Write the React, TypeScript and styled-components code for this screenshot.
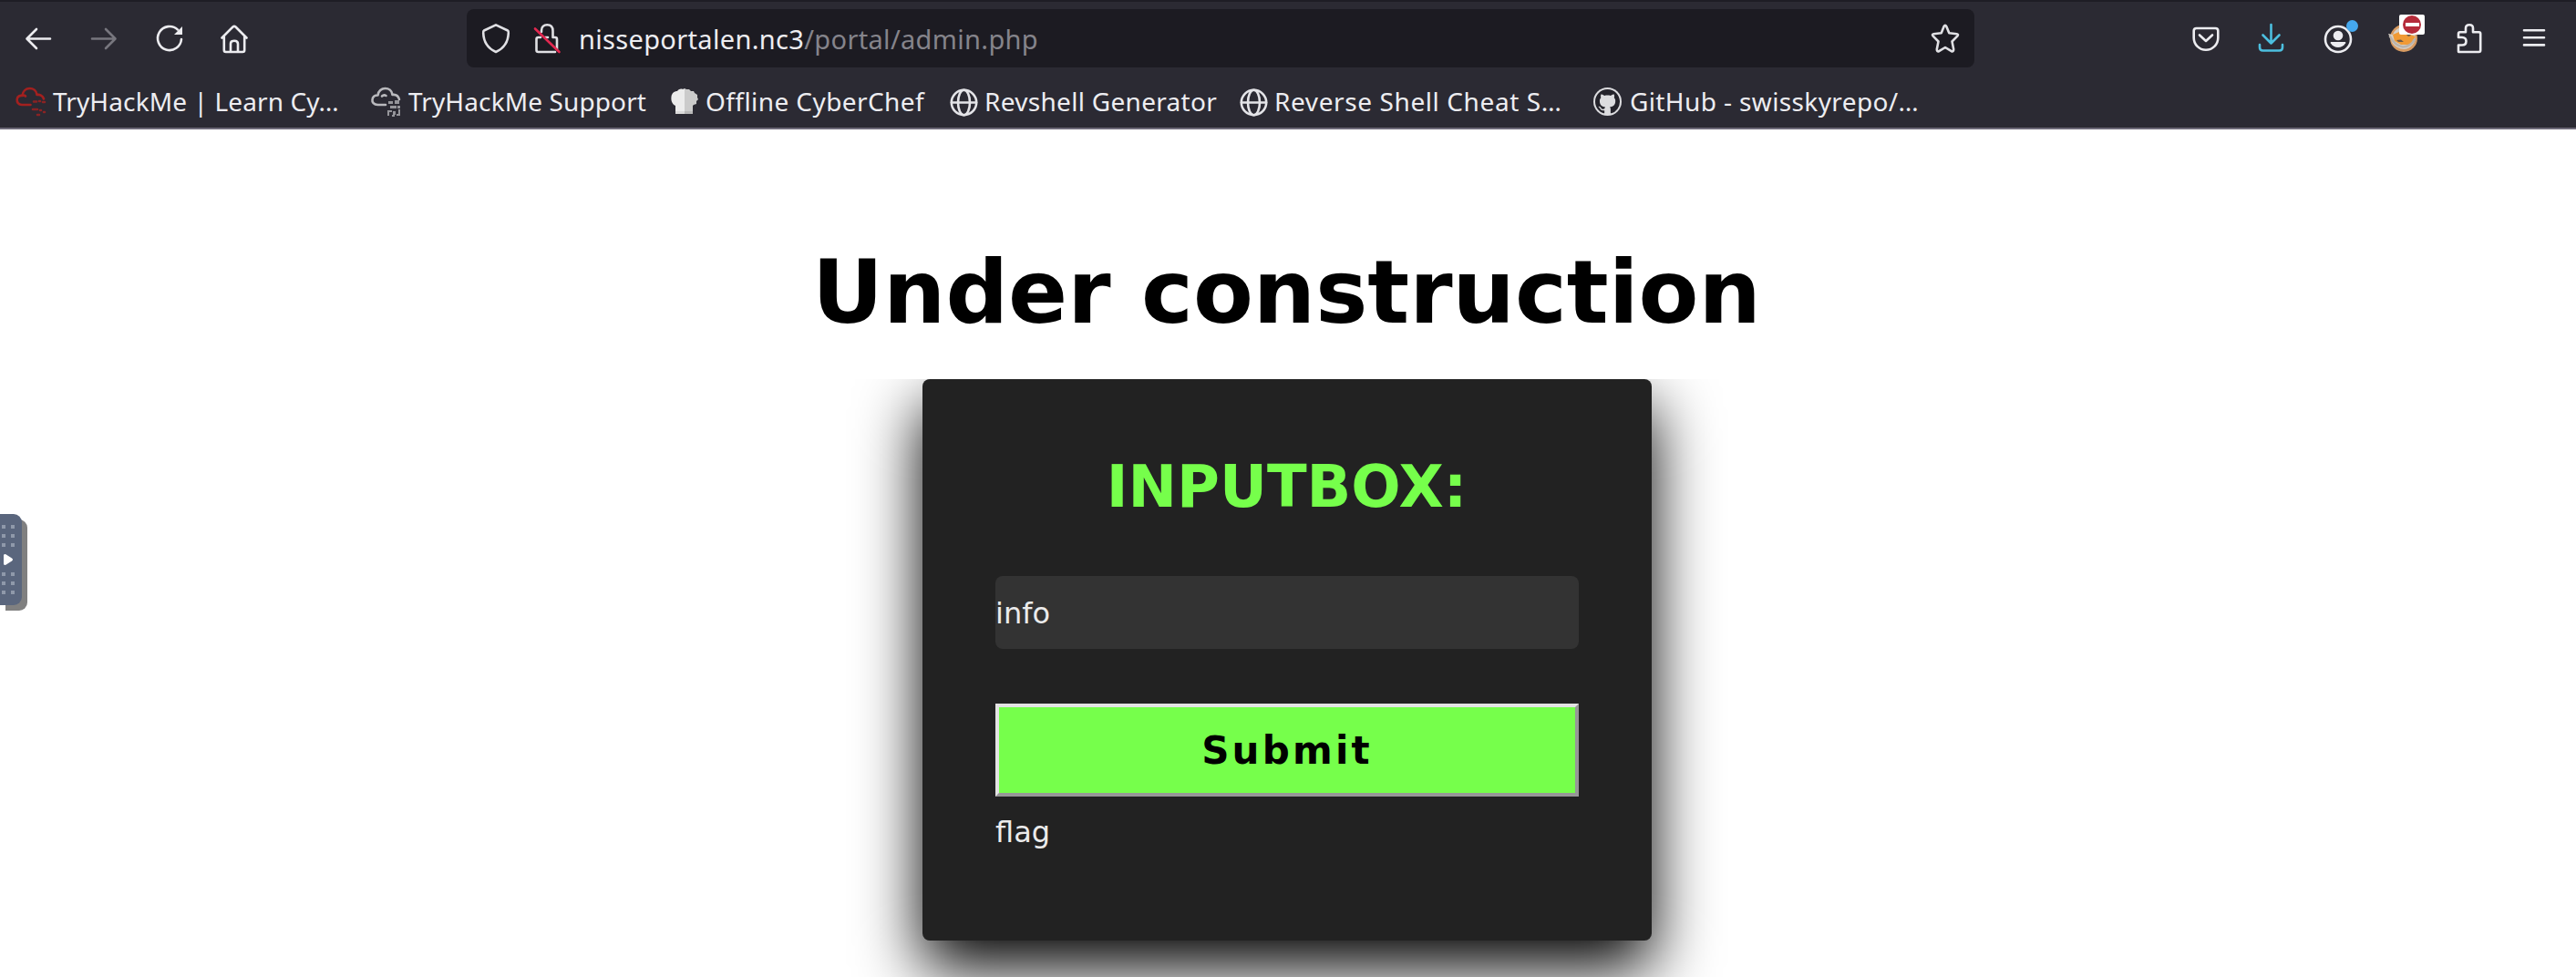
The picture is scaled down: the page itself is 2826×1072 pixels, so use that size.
import React from "react";
import styled, { createGlobalStyle } from "styled-components";

const GlobalStyle = createGlobalStyle`
  html, body { margin: 0; background: #fff; overflow: hidden; }
  *, *::before, *::after { box-sizing: border-box; }
`;

const Screen = styled.div`
  position: relative;
  display: flex;
  flex-direction: column;
  height: 1072px;
  overflow: hidden;
  background: #fff;
  font-family: "DejaVu Sans", sans-serif;
`;

const Chrome = styled.header`
  display: flex;
  flex-direction: column;
  flex: none;
  height: 142px;
  background: #2b2a33;
  border-top: 2px solid #1e1d25;
  border-bottom: 2px solid #6d6a78;
  font-family: "Noto Sans", "Open Sans", sans-serif;
  color: #ededf1;
`;

const NavBar = styled.div`
  display: flex;
  align-items: center;
  height: 80px;
  padding: 0 10px 0 6px;
`;

const NavGroup = styled.div`
  display: flex;
  align-items: center;
`;

const NavButton = styled.button<{ $dim?: boolean }>`
  position: relative;
  display: flex;
  align-items: center;
  justify-content: center;
  width: 72px;
  height: 64px;
  padding: 0;
  border: 0;
  background: none;
  color: ${(p) => (p.$dim ? "#77767e" : "#ececf0")};
`;

const Icon = styled.svg<{ $color?: string }>`
  display: block;
  flex: none;
  width: 32px;
  height: 32px;
  overflow: visible;
  fill: none;
  color: ${(p) => p.$color ?? "inherit"};
  stroke: currentColor;
  stroke-width: 2.6;
  stroke-linecap: round;
  stroke-linejoin: round;
`;

const AddressBar = styled.div`
  display: flex;
  align-items: center;
  width: 1654px;
  height: 64px;
  margin-left: 218px;
  margin-right: auto;
  padding: 0 16px 0 17px;
  border-radius: 8px;
  background: #1c1b22;
  color: #e0e0e4;
`;

const SiteIcons = styled.div`
  display: flex;
  gap: 24px;
`;

const Address = styled.div`
  flex: 1;
  margin-left: 18px;
  padding-top: 1px;
  font-size: 29px;
  line-height: 40px;
  letter-spacing: 0.33px;
  color: #ededf1;
`;

const AddressPath = styled.span`
  color: #85848b;
`;

const AccountDot = styled.span`
  position: absolute;
  left: 46px;
  top: 12px;
  width: 13px;
  height: 13px;
  border-radius: 50%;
  background: #45a8ee;
`;

const BlockBadge = styled.span`
  position: absolute;
  left: 32px;
  top: 6px;
  display: flex;
  align-items: center;
  justify-content: center;
  width: 28px;
  height: 22px;
  border-radius: 2px;
  background: #fff;
`;

const BlockSign = styled.span`
  display: flex;
  align-items: center;
  justify-content: center;
  width: 20px;
  height: 20px;
  border-radius: 50%;
  background: #b52b3a;

  &::after {
    content: "";
    width: 15px;
    height: 4px;
    background: #fff;
  }
`;

const BookmarkBar = styled.nav`
  display: flex;
  align-items: center;
  height: 58px;
  padding-left: 18px;
  padding-top: 2px;
`;

const Bookmark = styled.a<{ $width: number; $tracking: number; $gap?: number }>`
  display: flex;
  align-items: center;
  gap: ${(p) => p.$gap ?? 8}px;
  width: ${(p) => p.$width}px;
  font-size: 28px;
  line-height: 38px;
  letter-spacing: ${(p) => p.$tracking}px;
  white-space: nowrap;
`;

const BookmarkLabel = styled.span`
  padding-bottom: 2px;
`;

const Page = styled.main`
  display: flex;
  flex-direction: column;
  flex: 1;
  padding-top: 123px;
`;

const Title = styled.h1`
  margin: 0;
  height: 151px;
  padding-right: 3px;
  font-size: 96px;
  line-height: 112px;
  font-weight: 700;
  text-align: center;
  color: #000;
`;

const FormArea = styled.section`
  flex: 1;
  display: flex;
  justify-content: center;
  align-items: flex-start;
  padding-right: 2px;
  overflow: hidden;
`;

const Card = styled.form`
  display: flex;
  flex-direction: column;
  width: 800px;
  height: 616px;
  padding: 80px;
  border-radius: 8px;
  background: #222;
  box-shadow: 0 30px 70px #000;
`;

const CardTitle = styled.h2`
  margin: 1px 0 60px;
  padding-right: 1px;
  font-size: 64px;
  line-height: 75px;
  font-weight: 700;
  text-align: center;
  color: #76ff4b;
`;

const TextInput = styled.input`
  width: 100%;
  height: 80px;
  flex: none;
  margin: 0 0 60px;
  padding: 1px 0 0;
  border: 0;
  border-radius: 8px;
  background: #333;
  color: #ebebeb;
  font: 32px "DejaVu Sans", sans-serif;
  outline: none;
`;

const Submit = styled.button`
  width: 100%;
  height: 102px;
  flex: none;
  padding: 0;
  border: 4px solid;
  border-color: #e3e3e3 #979797 #979797 #e3e3e3;
  background: #76ff4b;
  color: #000;
  font: 700 42px "DejaVu Sans", sans-serif;
  letter-spacing: 3.2px;
`;

const Output = styled.p`
  margin: 20px 0 0;
  font-size: 32px;
  line-height: 38px;
  color: #ebebeb;
`;

const Handle = styled.aside`
  position: absolute;
  left: 0;
  top: 564px;
  display: flex;
  flex-direction: column;
  justify-content: space-between;
  width: 24px;
  height: 100px;
  padding: 12px 8px 12px 2px;
  border-radius: 0 9px 9px 0;
  background: #5a667d;
  box-shadow: 6px 6px 0 #808080;
`;

const Dots = styled.div`
  display: grid;
  grid-template-columns: 4px 4px;
  grid-auto-rows: 4px;
  gap: 6px;
`;

const Dot = styled.i`
  background: #8f99aa;
`;

const Arrow = styled.svg`
  display: block;
  width: 10px;
  height: 12px;
  margin-left: 2px;
`;

const Cloud = ({ color, dark }: { color: string; dark?: boolean }) => (
  <Icon viewBox="0 0 32 32" $color={color}>
    <path
      d={
        dark
          ? "M15 19H6.500C2 19 0 16 .5 13 1 9.500 4 8.500 6.500 8.500 7 4 10.500 1 14.500 1S22 3.500 22.500 8C26 7.500 29 9.500 30 13M11 9.500C12.500 8 14 8 15.500 9"
          : "M15.500 19H6C2 19 .5 16 .7 13 1 9.500 4 8.500 6.500 9 7 4 10.500 1 14.500 1S22 3.500 22.500 8C26 7.500 29 9.500 30 12.500M10 9.500C8.500 8 8 8.500 6.500 9"
      }
    />
    {dark ? (
      <path
        stroke="none"
        fill="currentColor"
        opacity="0.75"
        d="M18 15h5v3h-5zM25 14h5v4h-5zM20 20h7v3h-7zM28 20h3v3h-3zM17 25h5v2h-3v4h-2zM23 26h3v4h-3zM29 24h2v7h-4v-2h2zM22 30h3v2h-3z"
      />
    ) : (
      <path d="M19 15.500h3M25 15h1M29 16h2M18 24h5M26 25h1M30 27h1M23 30h2" opacity="0.8" />
    )}
  </Icon>
);

const ChefHat = () => (
  <Icon viewBox="0 0 32 32">
    <g stroke="none">
      <path d="M5 29V20C1 18 0 14 .500 10 1 6 4 4 7 4 8 2 11 1 13 2L15 1V29z" fill="#ececec" />
      <path d="M15 1l2 1 3 0 2 2 3 0 1 2 3 2 0 3 1 2-2 2 0 3-3 1-1 1V29H15z" fill="#cbcbcb" />
      <path d="M5 26H15V29H5z" fill="#dadada" />
      <path d="M15 26H24V29H15z" fill="#b8b8b8" />
    </g>
  </Icon>
);

const Globe = () => (
  <Icon viewBox="0 0 32 32" $color="#e4e4e8">
    <circle cx="15.500" cy="16.500" r="13.700" />
    <ellipse cx="15.500" cy="16.500" rx="6.500" ry="13.700" />
    <path d="M2 16.500H29" />
  </Icon>
);

const GitHub = () => (
  <Icon viewBox="0 0 32 32">
    <circle cx="15.500" cy="15.500" r="15.500" fill="#dcdcdf" stroke="none" />
    <path
      transform="translate(2 2) scale(1.690)"
      fill="#24232b"
      stroke="none"
      d="M8 0C3.580 0 0 3.580 0 8c0 3.540 2.290 6.530 5.470 7.590.4.070.55-.17.55-.38 0-.19-.01-.82-.01-1.490-2.010.37-2.530-.49-2.690-.94-.09-.23-.48-.94-.82-1.130-.28-.15-.68-.52-.01-.53.63-.01 1.080.58 1.230.82.72 1.210 1.870.87 2.330.66.070-.52.28-.87.51-1.070-1.780-.2-3.640-.89-3.640-3.950 0-.87.31-1.590.82-2.150-.08-.2-.36-1.020.08-2.120 0 0 .67-.21 2.200.82.64-.18 1.320-.27 2-.27s1.360.09 2 .27c1.530-1.040 2.200-.82 2.200-.82.44 1.100.16 1.920.08 2.120.51.56.82 1.270.82 2.150 0 3.070-1.870 3.750-3.650 3.950.29.25.54.73.54 1.480 0 1.070-.01 1.930-.01 2.200 0 .21.15.46.55.38A8.010 8.010 0 0 0 16 8c0-4.420-3.580-8-8-8z"
    />
  </Icon>
);

const bookmarks = [
  { label: "TryHackMe | Learn Cy…", width: 390, tracking: 0.12, icon: <Cloud color="#a3201f" /> },
  { label: "TryHackMe Support", width: 328, tracking: 0.12, icon: <Cloud color="#b9b9bd" dark /> },
  { label: "Offline CyberChef", width: 306, tracking: 0.42, gap: 6, icon: <ChefHat /> },
  { label: "Revshell Generator", width: 318, tracking: 0.3, gap: 6, icon: <Globe /> },
  { label: "Reverse Shell Cheat S…", width: 388, tracking: 0.6, gap: 6, icon: <Globe /> },
  { label: "GitHub - swisskyrepo/…", width: 370, tracking: 0.38, icon: <GitHub /> },
];

const DotGrid = () => (
  <Dots>
    {[0, 1, 2, 3, 4, 5].map((n) => (
      <Dot key={n} />
    ))}
  </Dots>
);

export default function App() {
  return (
    <>
      <GlobalStyle />
      <Screen>
        <Chrome>
          <NavBar>
            <NavGroup>
              <NavButton aria-label="Back">
                <Icon viewBox="0 0 32 32">
                  <path d="M29 16.500H4M14 6L3.500 16.500 14 27" />
                </Icon>
              </NavButton>
              <NavButton aria-label="Forward" $dim>
                <Icon viewBox="0 0 32 32">
                  <path d="M3 16.500H28M18 6L28.500 16.500 18 27" />
                </Icon>
              </NavButton>
              <NavButton aria-label="Reload">
                <Icon viewBox="0 0 32 32">
                  <path d="M29 17A13 13 0 1 1 25 6.600" />
                  <path d="M30 3V12H21z" fill="currentColor" stroke="none" />
                </Icon>
              </NavButton>
              <NavButton aria-label="Home">
                <Icon viewBox="0 0 32 32">
                  <path d="M1.500 15.500L13.500 3.500Q15 2.300 16.500 3.500L28.500 15.500M3.800 14V29Q3.800 31 5.800 31H24.200Q26.200 31 26.200 29V14M11 30.500V22Q11 18.800 15 18.800T19 22V30.500" />
                </Icon>
              </NavButton>
            </NavGroup>

            <AddressBar>
              <SiteIcons>
                <Icon viewBox="0 0 32 32">
                  <path d="M15 1.300L28 7.500Q29 8 28.800 10C28.500 20 24 27 15 31 6 27 1.500 20 1.200 10Q1 8 2 7.500z" />
                </Icon>
                <Icon viewBox="0 0 32 32">
                  <path d="M9 9V7.500C9 3.500 11.500 1.300 15.200 1.300S21.500 3.500 21.500 8V15H24Q26 15 26 17V28M8 15H5.500Q3.500 15 3.500 17V29Q3.500 31 5.500 31H24M13 15H16" />
                  <path d="M2 5.500L28.500 31" stroke="#e22850" />
                </Icon>
              </SiteIcons>
              <Address>
                nisseportalen.nc3<AddressPath>/portal/admin.php</AddressPath>
              </Address>
              <Icon viewBox="0 0 32 32">
                <path d="M14.600 3Q16 .500 17.300 3L20.300 10.300 28.700 11.200Q31 11.700 29.300 13.600L23.500 19.500 25.200 28Q25.300 31 22.800 30.200L16 26 9.200 30.200Q6.700 31 6.800 28L8.500 19.500 2.700 13.600Q1 11.700 3.300 11.200L11.700 10.300z" />
              </Icon>
            </AddressBar>

            <NavGroup>
              <NavButton aria-label="Pocket">
                <Icon viewBox="0 0 32 32">
                  <path d="M5.500 5H26.500Q29.300 5 29.300 7.800V15.500A13.300 13.300 0 0 1 2.700 15.500V7.800Q2.700 5 5.500 5zM9 12.500L16 19 23 12.500" />
                </Icon>
              </NavButton>
              <NavButton aria-label="Downloads">
                <Icon viewBox="0 0 32 32" $color="#4cbfdf">
                  <path d="M15.500 1V21.500M6.500 12.500L15.500 21.500 24.500 12.500M3 23V26Q3 29.500 6.500 29.500H24.500Q28 29.500 28 26V23" />
                </Icon>
              </NavButton>
              <NavButton aria-label="Account">
                <Icon viewBox="0 0 32 32">
                  <circle cx="17" cy="17" r="14" />
                  <g fill="currentColor" stroke="none">
                    <circle cx="17" cy="13" r="5.300" />
                    <path d="M9.500 20H24.500Q25.800 20 25.200 21.300A9.500 9.500 0 0 1 8.800 21.300Q8.200 20 9.500 20z" />
                  </g>
                </Icon>
                <AccountDot />
              </NavButton>
              <NavButton aria-label="Cookie extension">
                <Icon viewBox="0 0 32 32">
                  <g stroke="none">
                    <circle cx="17" cy="16" r="15" fill="#d79b62" />
                    <path d="M0 11L5 12Q7 6 14 4L29 10Q32 18 26 24 19 31 10 26 4 23 3 17z" fill="#d6cec4" />
                    <path d="M5 12L12 9 24 12 30 14 25 23 14 23 7 19z" fill="#f09a35" />
                    <path d="M9 18L14 17.500 17 20 11 20zM20 12l3-1 2 2-3 1z" fill="#6d5a49" />
                  </g>
                  <path d="M2 14Q7 24 16 25.500 25 25 29 17" stroke="#b9b3ac" />
                </Icon>
                <BlockBadge>
                  <BlockSign />
                </BlockBadge>
              </NavButton>
              <NavButton aria-label="Extensions">
                <Icon viewBox="0 0 32 32">
                  <path d="M5.300 31Q5 31 5 30V23.500H9Q13.500 23.500 13.500 19.300T9 15H5V11Q5 9.300 6.700 9.300H13V5Q13 1.300 17 1.300T21 5V9.300H27.500Q29.200 9.300 29.200 11V29.300Q29.200 31 27.500 31z" />
                </Icon>
              </NavButton>
              <NavButton aria-label="Menu">
                <Icon viewBox="0 0 32 32">
                  <path d="M5 7.200H27M5 15.300H27M5 23.400H27" />
                </Icon>
              </NavButton>
            </NavGroup>
          </NavBar>

          <BookmarkBar>
            {bookmarks.map((b) => (
              <Bookmark key={b.label} $width={b.width} $tracking={b.tracking} $gap={b.gap}>
                {b.icon}
                <BookmarkLabel>{b.label}</BookmarkLabel>
              </Bookmark>
            ))}
          </BookmarkBar>
        </Chrome>

        <Page>
          <Title>Under construction</Title>
          <FormArea>
            <Card onSubmit={(e) => e.preventDefault()}>
              <CardTitle>INPUTBOX:</CardTitle>
              <TextInput defaultValue="info" aria-label="Input" />
              <Submit type="submit">Submit</Submit>
              <Output>flag</Output>
            </Card>
          </FormArea>
        </Page>

        <Handle>
          <DotGrid />
          <Arrow viewBox="0 0 10 12">
            <path d="M0 1Q0 0 2 0L9 4.500Q11 6 9 7.500L2 12Q0 12 0 11z" fill="#fff" />
          </Arrow>
          <DotGrid />
        </Handle>
      </Screen>
    </>
  );
}
